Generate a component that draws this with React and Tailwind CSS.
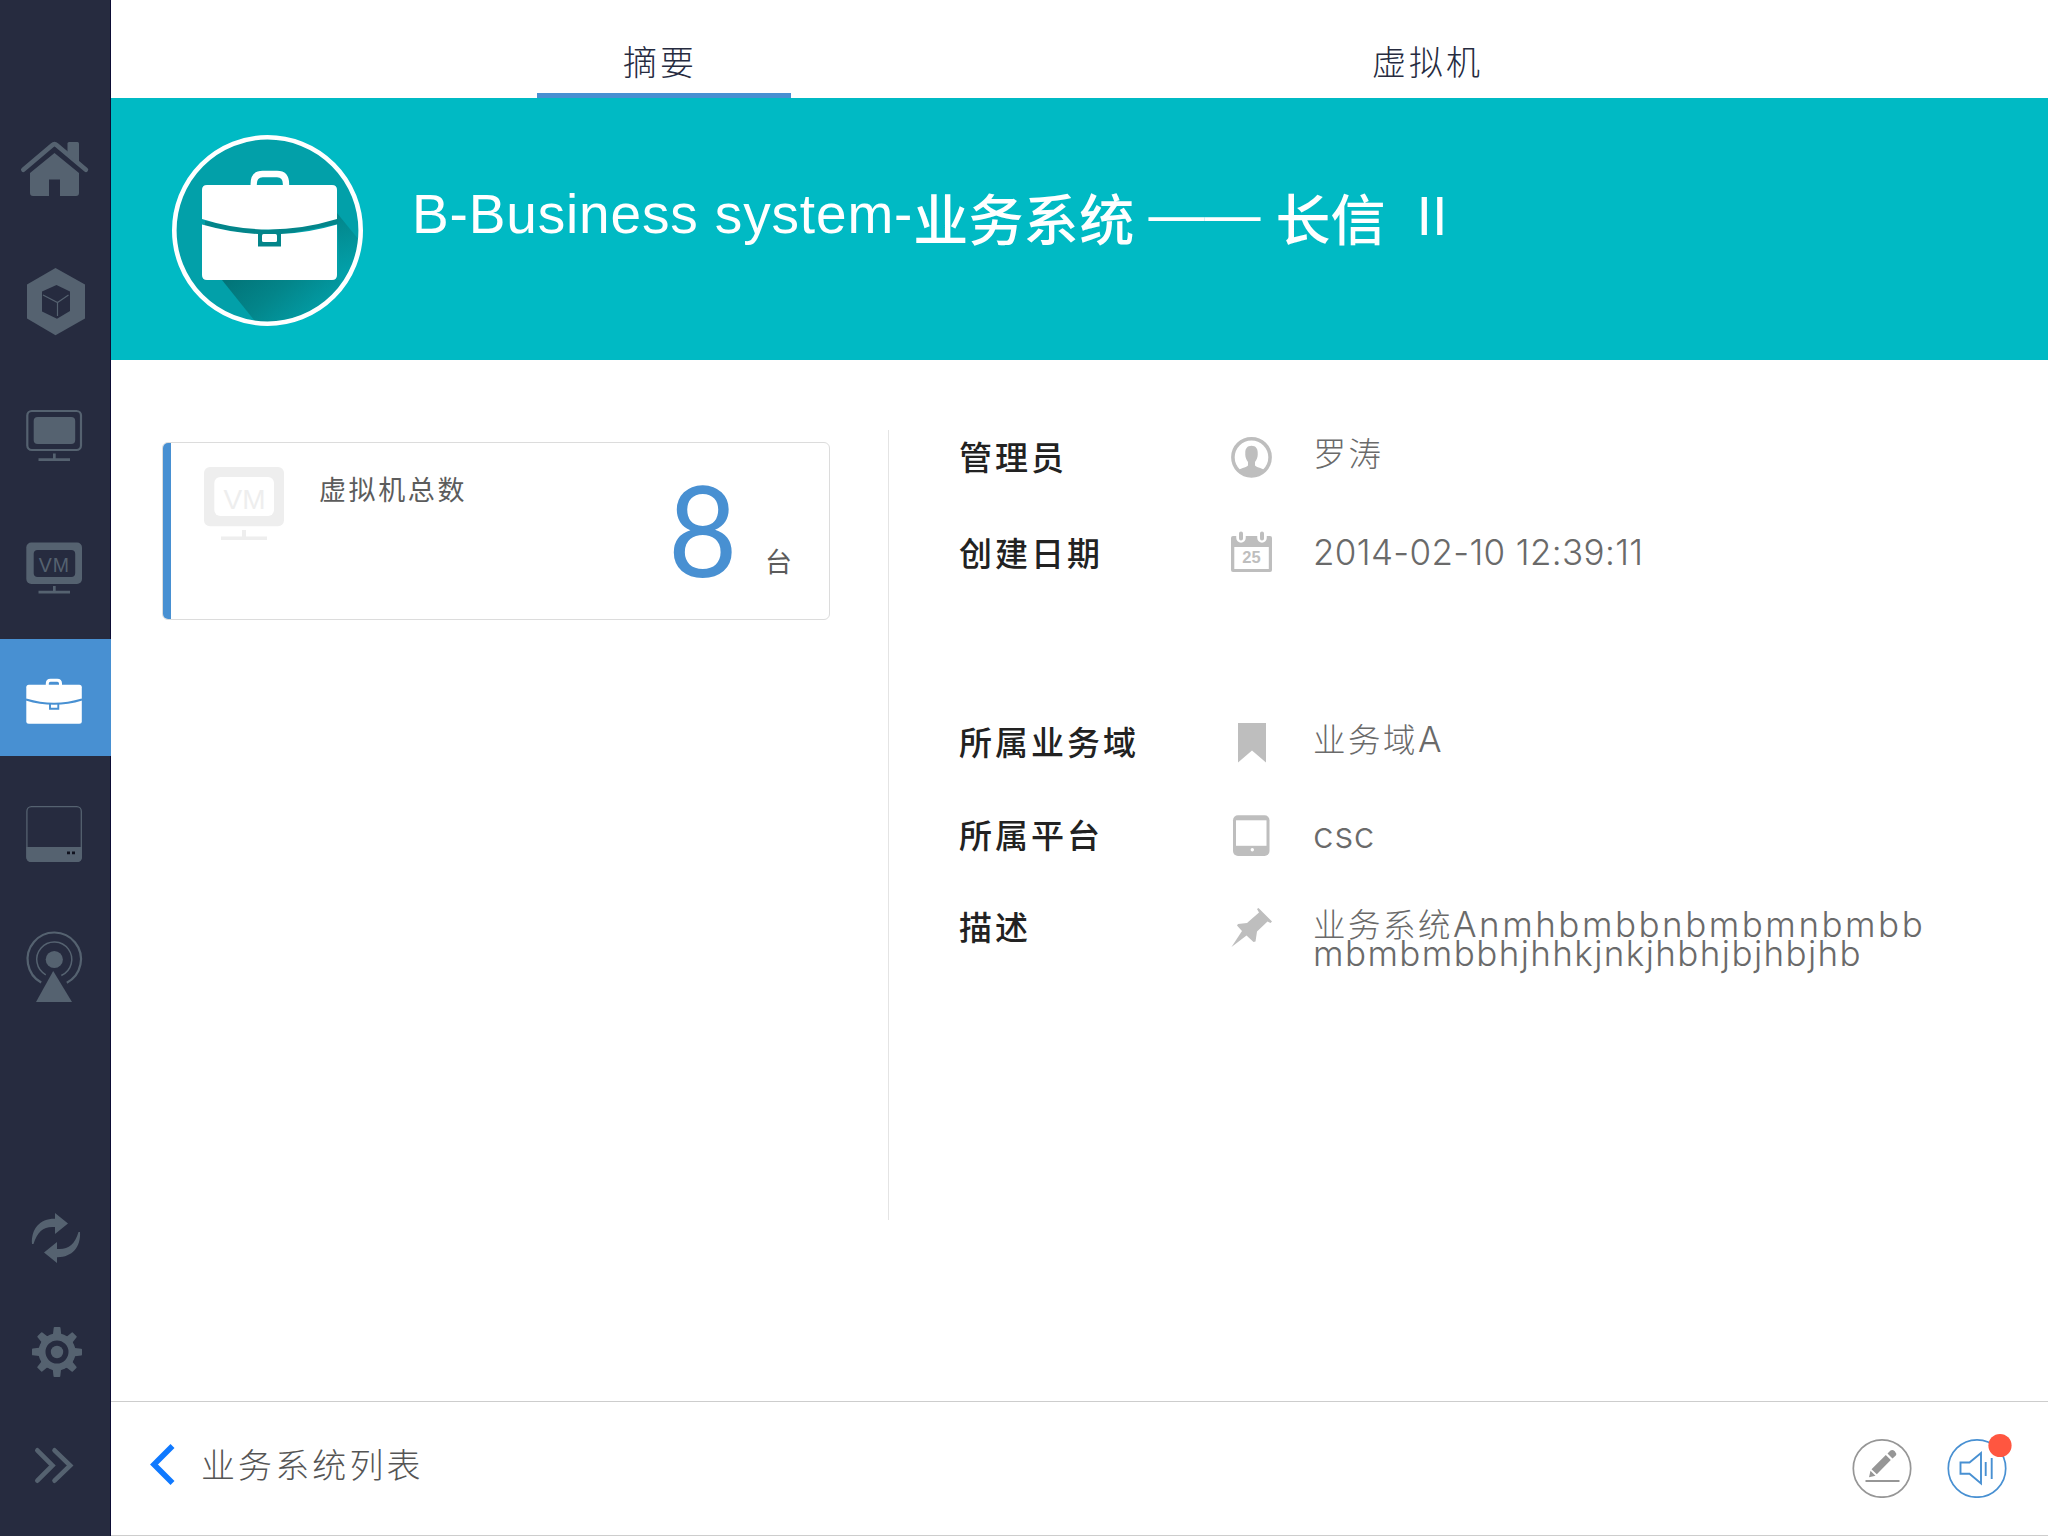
const SLATE = '#556270';
const NAVY = '#262b3f';
const GREY = '#bebebe';

function NavIcon({ top, height = 117, children }) {
  return (
    <svg width="111" height={height} viewBox={`0 ${top} 111 ${height}`} fill={SLATE}>
      {children}
    </svg>
  );
}

function NavButton({ active, children }) {
  return (
    <button className={active ? 'block h-[117px] w-[111px] bg-[#4890d2]' : 'block h-[117px] w-[110px]'}>
      {children}
    </button>
  );
}

function HomeIcon() {
  return (
    <NavIcon top={111}>
      <path d="M23.3 169.8 52.2 145.2Q54.5 143.2 56.8 145.2L85.9 169.8" fill="none" stroke={SLATE} strokeWidth="4.6" strokeLinecap="round" />
      <path d="M67.5 143.5q0-1.5 1.5-1.5h8.500q1.500 0 1.500 1.500V165L67.500 155Z" />
      <path d="M54.500 153 79 173V193q0 3-3 3H60V179.500H49V196H33q-3 0-3-3V173Z" />
    </NavIcon>
  );
}

function CubeIcon() {
  return (
    <NavIcon top={243}>
      <path d="M55.500 268 85 284.500V318.500L55.500 335.300 27 318.500V284.500Z" />
      <path d="M56.500 285 70 291.500V311L57 318.700 42 311.500V291.500Z" fill={NAVY} />
      <path d="M43 295 57.500 302.500 68.500 295M57.500 302.500V316" fill="none" stroke={SLATE} strokeWidth="1.200" />
    </NavIcon>
  );
}

function MonitorIcon() {
  return (
    <NavIcon top={375}>
      <rect x="27.300" y="411" width="53.700" height="39" rx="4.500" fill="none" stroke={SLATE} strokeWidth="2.200" />
      <rect x="33.700" y="417" width="41.500" height="27" rx="4" />
      <path d="M53 453.500h2.700V458.300H70V461H38.500V458.300H53Z" />
    </NavIcon>
  );
}

function VmIcon() {
  return (
    <NavIcon top={507}>
      <rect x="26.300" y="542.500" width="55.700" height="41.500" rx="5" />
      <rect x="33.700" y="550" width="41.500" height="27" rx="4" fill={NAVY} />
      <path d="M53 586h2.700V590.800H70V593.500H38.500V590.800H53Z" />
      <text x="54.300" y="571.800" textAnchor="middle" fontFamily="Liberation Sans" fontSize="19.500" letterSpacing="0.800">VM</text>
    </NavIcon>
  );
}

function BriefcaseIcon() {
  return (
    <NavIcon top={639}>
      <rect x="26.300" y="684.700" width="55.500" height="39" rx="2.500" fill="#fff" />
      <path d="M47.300 685V683.500q0-3.200 3.200-3.200H57.300q3.200 0 3.200 3.200V685" fill="none" stroke="#fff" strokeWidth="3" />
      <path d="M26 699.500Q54 708 82 699.500" fill="none" stroke="#4890d2" strokeWidth="1.900" />
      <path d="M50 704V708.800H58.300V704" fill="none" stroke="#4890d2" strokeWidth="1.900" />
    </NavIcon>
  );
}

function DiskIcon() {
  return (
    <NavIcon top={771}>
      <rect x="26.900" y="806.700" width="54.400" height="54.600" rx="4.500" fill="none" stroke={SLATE} strokeWidth="1.300" />
      <path d="M26.300 847H82V857q0 5-5 5H31.300q-5 0-5-5Z" />
      <path d="M67 851.500h3v2.700h-3ZM72 851.500h3v2.700h-3Z" fill="#11131f" />
    </NavIcon>
  );
}

function AntennaIcon() {
  return (
    <NavIcon top={903}>
      <g fill="none" stroke={SLATE}>
        <path d="M41.200 982.500A26.700 26.700 0 1 1 66.800 982.800" strokeWidth="2.200" />
        <path d="M45.800 974.800A17.500 17.500 0 1 1 61.300 975.500" strokeWidth="1.500" />
      </g>
      <circle cx="54.300" cy="959.500" r="8.600" />
      <path d="M53.200 971 72 1002H36Z" />
    </NavIcon>
  );
}

function RefreshIcon() {
  const arrow = 'M32 1244C31 1229 40 1218.500 55 1218.800V1213L68 1223.500 55 1234V1227C44 1226 37.500 1231 33.500 1244Z';
  return (
    <NavIcon top={1181} height={114}>
      <path d={arrow} />
      <path d={arrow} transform="rotate(180 56 1238)" />
    </NavIcon>
  );
}

function GearIcon() {
  return (
    <NavIcon top={1295} height={114}>
      <circle cx="57" cy="1352" r="15" fill="none" stroke={SLATE} strokeWidth="7" />
      <circle cx="57" cy="1352" r="6.200" />
      {[0, 45, 90, 135, 180, 225, 270, 315].map((a) => (
        <path key={a} d="M49.500 1336 53 1334 53.700 1327.800Q53.800 1327 54.600 1327H59.600Q60.400 1327 60.500 1327.800L61.200 1334 64.500 1336Z" transform={`rotate(${a} 57 1352)`} />
      ))}
    </NavIcon>
  );
}

function ExpandIcon() {
  return (
    <NavIcon top={1409} height={114}>
      <path d="M37.300 1450.300 52.500 1465.500 37.300 1480.700M54.500 1450.300 70.200 1465.500 54.500 1480.700" fill="none" stroke={SLATE} strokeWidth="4.600" strokeLinecap="round" />
    </NavIcon>
  );
}

function HeroBadge() {
  return (
    <svg width="192" height="192" viewBox="172 134 192 192" className="shrink-0">
      <defs>
        <linearGradient id="shade" gradientUnits="userSpaceOnUse" x1="262" y1="252" x2="318" y2="322">
          <stop offset="0" stopColor="#027478" />
          <stop offset="0.450" stopColor="#03858a" />
          <stop offset="1" stopColor="#02a0a9" />
        </linearGradient>
        <linearGradient id="side" gradientUnits="userSpaceOnUse" x1="335" y1="215" x2="352" y2="270">
          <stop offset="0" stopColor="#03858a" />
          <stop offset="1" stopColor="#02a0a9" />
        </linearGradient>
        <clipPath id="disc"><circle cx="267.500" cy="230.500" r="92" /></clipPath>
      </defs>
      <circle cx="267.500" cy="230.500" r="93" fill="#02a0a9" />
      <g clipPath="url(#disc)">
        <path d="M222 280 262 330H340V280Z" fill="url(#shade)" />
        <path d="M337 213 372 256 340 285Z" fill="url(#side)" />
        <path d="M268 230 205 221V226L258 236V247H281V235L338 224V217Z" fill="#03858a" />
      </g>
      <circle cx="267.500" cy="230.500" r="93.200" fill="none" stroke="#fff" strokeWidth="4.600" />
      <path d="M253.700 187V184q0-10 9-10H277q9 0 9 10V187" fill="none" stroke="#fff" strokeWidth="6.300" />
      <path d="M207 185H332q5 0 5 5V219Q268 240 202 219V190q0-5 5-5Z" fill="#fff" />
      <path d="M202 224.500Q232 233 258 234V246.500H281V234Q308 233 337 224.500V275q0 5-5 5H207q-5 0-5-5Z" fill="#fff" />
      <rect x="262" y="234" width="15" height="8" rx="1.500" fill="#fff" />
    </svg>
  );
}

function UserIcon() {
  return (
    <svg width="42" height="42" viewBox="1230 436 42 42">
      <defs><clipPath id="face"><circle cx="1251.500" cy="457.300" r="18.500" /></clipPath></defs>
      <circle cx="1251.500" cy="457.300" r="18.600" fill="#fff" stroke={GREY} strokeWidth="3.600" />
      <g clipPath="url(#face)" fill={GREY}>
        <path d="M1251.500 445.800C1256 445.800 1258 449 1257.700 453.500 1258 457 1256.500 460 1255 462V465.500C1257 468 1263 467.500 1267 472V480H1236V472C1240 467.500 1246 468 1248 465.500V462C1246.500 460 1245 457 1245.300 453.500 1245 449 1247 445.800 1251.500 445.800Z" />
      </g>
    </svg>
  );
}

function CalendarIcon() {
  return (
    <svg width="42" height="42" viewBox="1230 530 42 42">
      <path d="M1233 536H1270q2 0 2 2V570q0 2-2 2H1233q-2 0-2-2V538q0-2 2-2Z" fill={GREY} />
      <rect x="1234.300" y="547" width="34.500" height="22" fill="#fff" />
      <path d="M1241 531V538M1262 531V538" stroke="#fff" strokeWidth="9.500" strokeLinecap="round" />
      <path d="M1241 533.500V538.500M1262 533.500V538.500" stroke={GREY} strokeWidth="4" strokeLinecap="round" />
      <text x="1251.500" y="563.300" textAnchor="middle" fontFamily="Liberation Sans" fontWeight="bold" fontSize="16.500" fill={GREY}>25</text>
    </svg>
  );
}

function BookmarkIcon() {
  return (
    <svg width="42" height="42" viewBox="1230 721 42 42" fill={GREY}>
      <path d="M1238 723H1266V762.500L1252 750.500 1238 762.500Z" />
    </svg>
  );
}

function TabletIcon() {
  return (
    <svg width="42" height="42" viewBox="1230 814 42 42">
      <rect x="1233" y="815.300" width="36.500" height="40.700" rx="5" fill={GREY} />
      <rect x="1236" y="820.300" width="30.500" height="25.500" fill="#fff" />
      <circle cx="1252.300" cy="849.700" r="1.700" fill="#fff" />
    </svg>
  );
}

function PinIcon() {
  return (
    <svg width="42" height="42" viewBox="1230 906 42 42" fill={GREY}>
      <path d="M1257 909 1258.500 908 1272 921.500 1270.500 923 1267.500 921.500 1257 931.500 1255.500 941.500 1253.500 942 1246.500 935.500 1231.500 947 1242 931 1237 925.500 1238 924 1247 923 1259 912.500Z" />
    </svg>
  );
}

function Row({ label, icon, labelClass = 'pb-[2px]', children }) {
  return (
    <div className="flex h-[42px] items-center">
      <div className={`${labelClass} w-[271px] whitespace-nowrap font-['Noto_Sans_CJK_SC',sans-serif] text-[33px] leading-none font-medium tracking-[3px] text-[#222]`}>
        {label}
      </div>
      {icon}
      <div className="ml-[41px] whitespace-nowrap font-[Inter,'Noto_Sans_CJK_SC',sans-serif] font-light text-[#6a6a6a]">
        {children}
      </div>
    </div>
  );
}

function Sidebar() {
  return (
    <nav className="flex w-[111px] shrink-0 flex-col border-r border-[#0d0d35] bg-[#262b3f] pt-[111px]">
      <div className="flex flex-col gap-[15px]">
        <NavButton><HomeIcon /></NavButton>
        <NavButton><CubeIcon /></NavButton>
        <NavButton><MonitorIcon /></NavButton>
        <NavButton><VmIcon /></NavButton>
        <NavButton active><BriefcaseIcon /></NavButton>
        <NavButton><DiskIcon /></NavButton>
        <NavButton><AntennaIcon /></NavButton>
      </div>
      <div className="mt-[161px] flex flex-col">
        <RefreshIcon />
        <GearIcon />
        <ExpandIcon />
      </div>
    </nav>
  );
}

function Tabs() {
  return (
    <div className="flex h-[98px] shrink-0 pl-[426px] font-['Noto_Sans_CJK_SC',sans-serif] text-[34px] leading-none font-light tracking-[3px] text-[#262b3f]">
      <button className="flex h-[98px] w-[254px] items-start border-b-[5px] border-[#4890d2] pt-[44px] pl-[86px] text-left">
        摘要
      </button>
      <button className="ml-[496px] flex h-[98px] w-[254px] items-start pt-[44px] pl-[85px] text-left">
        虚拟机
      </button>
    </div>
  );
}

function Hero() {
  return (
    <header className="flex h-[262px] shrink-0 bg-[#00bac4] pt-[36px] pl-[61px] text-white">
      <HeroBadge />
      <h1 className="mt-[52px] ml-[48px] flex items-start whitespace-pre font-['Liberation_Sans',sans-serif] text-[55px] leading-none">
        <span className="mt-[1px] tracking-[0.850px]">B-Business system-</span>
        <span className="mt-[3px] font-['Noto_Sans_CJK_SC',sans-serif] font-medium tracking-[0.300px]">业务系统</span>
        <span className="ml-[14px] text-[56px] leading-[55px]">——</span>
        <span className="mt-[3px] ml-[15px] font-['Noto_Sans_CJK_SC',sans-serif] font-medium">长信</span>
        <span className="mt-[2px] ml-[31px] text-[56px]">II</span>
      </h1>
    </header>
  );
}

function VmCard() {
  return (
    <section className="mt-[82px] ml-[51px] flex h-[178px] w-[668px] shrink-0 overflow-hidden rounded-[6px] border border-[#dcdcdc] font-['Noto_Sans_CJK_SC',sans-serif] text-[27px] leading-none text-[#5c5c5c]">
      <div className="w-[8px] bg-[#4890d2]" />
      <svg width="80" height="74" viewBox="204 467 80 74" fill="#eee" className="mt-[24px] ml-[33px]">
        <rect x="204" y="467" width="80" height="59.300" rx="6" />
        <rect x="214.300" y="477" width="59.700" height="39" rx="6" fill="#fff" />
        <path d="M242 530h4V536.500H267V540H221V536.500H242Z" />
        <text x="244.500" y="508.800" textAnchor="middle" fontFamily="Liberation Sans" fontSize="28">VM</text>
      </svg>
      <div className="mt-[32px] ml-[35px] w-[349px] tracking-[2.600px]">虚拟机总数</div>
      <div className="mt-[23px] w-[75px] origin-left scale-x-95 font-[Lato,sans-serif] text-[126px] leading-[125px] text-[#4890d2]">8</div>
      <div className="mt-[104px] ml-[22px]">台</div>
    </section>
  );
}

function Details() {
  return (
    <section className="mt-[76px] ml-[70px] flex flex-col">
      <Row label="管理员" icon={<UserIcon />}>
        <div className="mb-[3px] ml-[0.500px] text-[32.500px] leading-none tracking-[2.500px]">罗涛</div>
      </Row>
      <div className="h-[52px]" />
      <Row label="创建日期" icon={<CalendarIcon />} labelClass="pt-[3px]">
        <div className="mt-[2px] text-[35px] leading-none tracking-[0.350px]">2014-02-10 12:39:11</div>
      </Row>
      <div className="h-[149px]" />
      <Row label="所属业务域" icon={<BookmarkIcon />}>
        <div className="mb-[5px] text-[35px] leading-none"><span className="text-[32.500px] tracking-[2.500px]">业务域</span>A</div>
      </Row>
      <div className="h-[51px]" />
      <Row label="所属平台" icon={<TabletIcon />}>
        <div className="mb-[2px] text-[37px] leading-none tracking-[0.500px]">csc</div>
      </Row>
      <div className="h-[50px]" />
      <Row label="描述" icon={<PinIcon />}>
        <div className="mt-[23px] text-[35px] leading-[30px]">
          <div className="h-[29.500px]"><span className="text-[32.500px] tracking-[2.500px]">业务系统</span><span className="tracking-[2.500px]">Anmhbmbbnbmbmnbmbb</span></div>
          <div className="h-[30px] tracking-[1.400px]">mbmbmbbhjhhkjnkjhbhjbjhbjhb</div>
        </div>
      </Row>
    </section>
  );
}

function Footer() {
  return (
    <footer className="flex h-[135px] shrink-0 border-t border-b border-[#cdcdcd]">
      <svg width="26" height="44" viewBox="149 1443 26 44" className="mt-[41px] ml-[38px]">
        <path d="M172.500 1446 154 1464.500 172.500 1483" fill="none" stroke="#0f79ff" strokeWidth="5.600" />
      </svg>
      <div className="mt-[45px] ml-[26px] font-['Noto_Sans_CJK_SC',sans-serif] text-[34px] leading-none font-light tracking-[3.100px] text-[#555]">
        业务系统列表
      </div>
      <svg width="60" height="60" viewBox="1852.500 1438 60 60" className="mt-[36px] mr-[35px] ml-auto" fill="#969696">
        <circle cx="1882.500" cy="1468.500" r="28.700" fill="none" stroke="#969696" strokeWidth="1.700" />
        <path d="M1866 1480H1900V1482H1866Z" />
        <path d="M1869.500 1477.300 1871 1470.800 1876 1475.800ZM1872 1469.300 1886.300 1455 1891.300 1460 1877.300 1474.300ZM1888 1453.500 1891 1450.500Q1893 1449.300 1895.300 1451.300 1897.500 1453.700 1896.300 1455.500L1893 1458.500Z" />
      </svg>
      <svg width="66" height="66" viewBox="1947.500 1432 66 66" className="mt-[30px] mr-[35px]" fill="none" stroke="#4890d2">
        <circle cx="1977.500" cy="1468.500" r="28.700" strokeWidth="1.700" />
        <path d="M1961 1462.500H1970L1981.500 1453V1483.500L1970 1473.800H1961Z" strokeWidth="1.900" />
        <path d="M1986.200 1462V1476M1992.200 1458V1479" strokeWidth="1.900" />
        <circle cx="2000.500" cy="1445.500" r="11.600" fill="#ff5640" stroke="none" />
      </svg>
    </footer>
  );
}

export default function App() {
  return (
    <div className="flex h-[1536px] w-[2048px] overflow-hidden bg-white">
      <Sidebar />
      <main className="flex grow flex-col">
        <Tabs />
        <Hero />
        <div className="flex grow">
          <VmCard />
          <div className="mt-[70px] ml-[58px] h-[790px] w-px bg-[#e4e4e4]" />
          <Details />
        </div>
        <Footer />
      </main>
    </div>
  );
}
